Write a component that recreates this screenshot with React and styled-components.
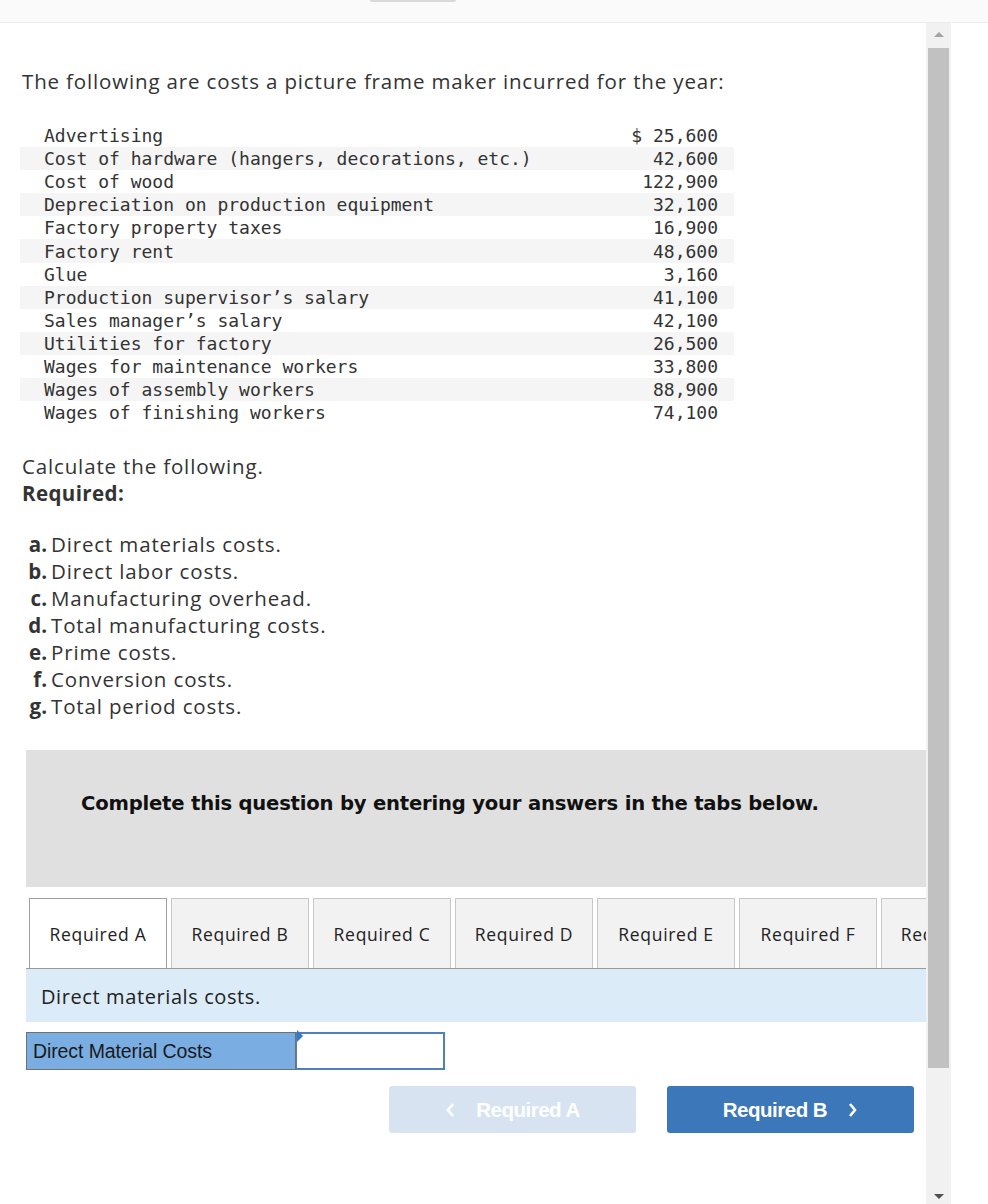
import styled, { createGlobalStyle } from "styled-components";

const GlobalStyle = createGlobalStyle`
  html, body {
    margin: 0;
    padding: 0;
    background: #ffffff;
  }
  body {
    font-family: "Open Sans", "Liberation Sans", sans-serif;
    color: #333333;
  }
`;

const costs = [
  ["Advertising", "$ 25,600"],
  ["Cost of hardware (hangers, decorations, etc.)", "42,600"],
  ["Cost of wood", "122,900"],
  ["Depreciation on production equipment", "32,100"],
  ["Factory property taxes", "16,900"],
  ["Factory rent", "48,600"],
  ["Glue", "3,160"],
  ["Production supervisor\u2019s salary", "41,100"],
  ["Sales manager\u2019s salary", "42,100"],
  ["Utilities for factory", "26,500"],
  ["Wages for maintenance workers", "33,800"],
  ["Wages of assembly workers", "88,900"],
  ["Wages of finishing workers", "74,100"],
];

const requirements = [
  ["a.", "Direct materials costs."],
  ["b.", "Direct labor costs."],
  ["c.", "Manufacturing overhead."],
  ["d.", "Total manufacturing costs."],
  ["e.", "Prime costs."],
  ["f.", "Conversion costs."],
  ["g.", "Total period costs."],
];

const tabs = ["A", "B", "C", "D", "E", "F", "G"];

const Page = styled.div`
  width: 988px;
  height: 1204px;
  overflow: hidden;
  display: flex;
  flex-direction: column;
`;

const TopBar = styled.div`
  height: 22px;
  flex: none;
  background: #fafafa;
  border-bottom: 1px solid #ececec;
  display: flex;
`;

const TopHandle = styled.div`
  margin-left: 370px;
  width: 86px;
  height: 2px;
  background: #d9d9d9;
  border-radius: 0 0 4px 4px;
`;

const Body = styled.div`
  flex: 1;
  display: flex;
  min-height: 0;
`;

const Content = styled.div`
  width: 926px;
  flex: none;
  padding-top: 45px;
`;

const Heading = styled.p`
  margin: 0 0 29px 22px;
  font-size: 20.5px;
  letter-spacing: 0.85px;
  line-height: 27px;
`;

const CostTable = styled.div`
  margin-left: 20px;
  width: 714px;
  display: flex;
  flex-direction: column;
`;

const CostRow = styled.div`
  display: flex;
  justify-content: space-between;
  align-items: center;
  height: 23.1px;
  padding: 0 16px 0 24px;
  background: ${(p) => (p.$striped ? "#f5f5f5" : "transparent")};
  font-family: "DejaVu Sans Mono", "Liberation Mono", monospace;
  font-size: 18px;
  color: #333333;
  white-space: pre;
`;

const Section = styled.div`
  margin: 29px 0 0 22px;
  font-size: 20.5px;
  letter-spacing: 0.85px;
  line-height: 27px;
`;

const Strong = styled.div`
  font-weight: 700;
  letter-spacing: 0.4px;
`;

const ReqList = styled.div`
  margin: 24px 0 0 22px;
  display: flex;
  flex-direction: column;
`;

const ReqItem = styled.div`
  font-size: 20.5px;
  letter-spacing: 0.85px;
  line-height: 27px;
  display: flex;
`;

const ReqLabel = styled.span`
  font-weight: 700;
  width: 25px;
  text-align: right;
  margin-right: 4px;
  letter-spacing: 0;
`;

const Notice = styled.div`
  margin: 30px 0 0 26px;
  height: 137px;
  background: #e0e0e0;
  padding: 42px 0 0 55px;
  box-sizing: border-box;
  font-family: "DejaVu Sans", Verdana, sans-serif;
  font-weight: 700;
  font-size: 19.6px;
  color: #111111;
  letter-spacing: -0.2px;
`;

const TabStrip = styled.div`
  margin: 11px 0 0 26px;
  padding-left: 3px;
  display: flex;
  gap: 4px;
  border-bottom: 1px solid #9a9a9a;
  overflow: hidden;
  white-space: nowrap;
`;

const Tab = styled.div`
  flex: none;
  width: 138px;
  box-sizing: border-box;
  display: flex;
  align-items: center;
  justify-content: center;
  font-family: "Open Sans", "Liberation Sans", sans-serif;
  font-size: 17.5px;
  letter-spacing: 0.7px;
  color: #222222;
  background: ${(p) => (p.$active ? "#ffffff" : "#f2f2f2")};
  border: 1px solid ${(p) => (p.$active ? "#a0a0a0" : "#c8c8c8")};
  border-bottom: none;
  margin-bottom: ${(p) => (p.$active ? "-1px" : "0")};
  height: ${(p) => (p.$active ? "71px" : "70px")};
`;

const Prompt = styled.div`
  margin-left: 26px;
  height: 53px;
  background: #dbebf8;
  display: flex;
  align-items: center;
  padding: 2px 0 0 15px;
  box-sizing: border-box;
  font-size: 20px;
  letter-spacing: 0.6px;
  color: #222222;
`;

const AnswerRow = styled.div`
  margin: 10px 0 0 26px;
  display: flex;
  height: 38px;
`;

const AnswerLabel = styled.div`
  width: 270px;
  box-sizing: border-box;
  background: #7aaee3;
  border: 1px solid #707070;
  display: flex;
  align-items: center;
  padding-left: 6px;
  font-family: "Liberation Sans", Arial, sans-serif;
  font-size: 19.5px;
  letter-spacing: -0.1px;
  color: #1a1a1a;
`;

const AnswerInput = styled.div`
  position: relative;
  width: 149px;
  box-sizing: border-box;
  background: #ffffff;
  border: 2px solid #4f7fbf;
  border-left: 1px solid #4f7fbf;

  &::before {
    content: "";
    position: absolute;
    left: 0;
    top: 0;
    border-top: 6px solid transparent;
    border-bottom: 6px solid transparent;
    border-left: 6px solid #3b78c4;
    transform: translateY(-4px);
  }
`;

const NavRow = styled.div`
  margin: 16px 12px 0 26px;
  display: flex;
  justify-content: flex-end;
  gap: 31px;
`;

const NavButton = styled.div`
  width: 247px;
  height: 47px;
  border-radius: 3px;
  display: flex;
  align-items: center;
  justify-content: center;
  gap: 21px;
  background: ${(p) => (p.$disabled ? "#d8e3f1" : "#3b77b9")};
  color: #ffffff;
  font-family: "Liberation Sans", Arial, sans-serif;
  font-weight: 700;
  font-size: 20.5px;
  letter-spacing: -0.5px;
`;

const Chevron = styled.svg`
  width: 10px;
  height: 16px;
`;

const Scrollbar = styled.div`
  width: 25px;
  flex: none;
  background: #f1f1f1;
  display: flex;
  flex-direction: column;
  align-items: center;
`;

const Arrow = styled.div`
  margin-top: ${(p) => (p.$down ? "auto" : "9px")};
  margin-bottom: ${(p) => (p.$down ? "5px" : "0")};
  width: 0;
  height: 0;
  border-left: 5px solid transparent;
  border-right: 5px solid transparent;
  ${(p) =>
    p.$down
      ? "border-top: 5px solid #505050;"
      : "border-bottom: 5px solid #a3a3a3;"}
`;

const Thumb = styled.div`
  margin-top: 11px;
  width: 21px;
  height: 1020px;
  background: #c1c1c1;
`;

export default function App() {
  return (
    <Page>
      <GlobalStyle />
      <TopBar>
        <TopHandle />
      </TopBar>
      <Body>
        <Content>
          <Heading>
            The following are costs a picture frame maker incurred for the year:
          </Heading>
          <CostTable>
            {costs.map(([name, amount], i) => (
              <CostRow key={name} $striped={i % 2 === 1}>
                <span>{name}</span>
                <span>{amount}</span>
              </CostRow>
            ))}
          </CostTable>
          <Section>
            <div>Calculate the following.</div>
            <Strong>Required:</Strong>
          </Section>
          <ReqList>
            {requirements.map(([label, text]) => (
              <ReqItem key={label}>
                <ReqLabel>{label}</ReqLabel>
                <span>{text}</span>
              </ReqItem>
            ))}
          </ReqList>
          <Notice>
            Complete this question by entering your answers in the tabs below.
          </Notice>
          <TabStrip>
            {tabs.map((t, i) => (
              <Tab key={t} $active={i === 0}>
                Required {t}
              </Tab>
            ))}
          </TabStrip>
          <Prompt>Direct materials costs.</Prompt>
          <AnswerRow>
            <AnswerLabel>Direct Material Costs</AnswerLabel>
            <AnswerInput />
          </AnswerRow>
          <NavRow>
            <NavButton $disabled>
              <Chevron viewBox="0 0 10 16">
                <path d="M8 2 L3 8 L8 14" fill="none" stroke="#ffffff" strokeWidth="2.6" />
              </Chevron>
              <span>Required A</span>
            </NavButton>
            <NavButton>
              <span>Required B</span>
              <Chevron viewBox="0 0 10 16">
                <path d="M2 2 L7 8 L2 14" fill="none" stroke="#ffffff" strokeWidth="2.6" />
              </Chevron>
            </NavButton>
          </NavRow>
        </Content>
        <Scrollbar>
          <Arrow />
          <Thumb />
          <Arrow $down />
        </Scrollbar>
      </Body>
    </Page>
  );
}
